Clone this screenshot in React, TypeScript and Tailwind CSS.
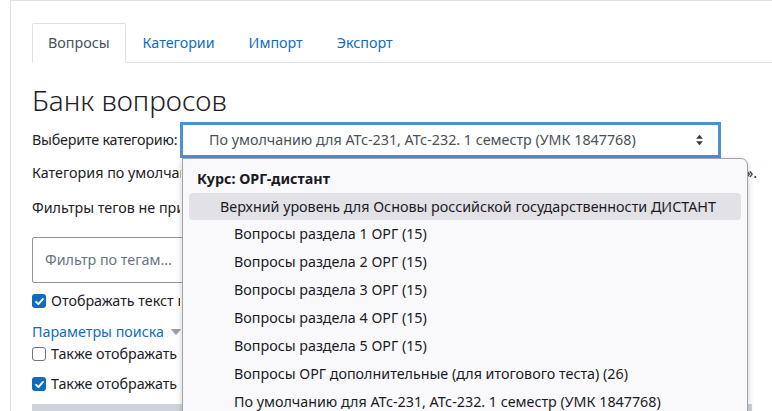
const items = [
  "Вопросы раздела 1 ОРГ (15)",
  "Вопросы раздела 2 ОРГ (15)",
  "Вопросы раздела 3 ОРГ (15)",
  "Вопросы раздела 4 ОРГ (15)",
  "Вопросы раздела 5 ОРГ (15)",
  "Вопросы ОРГ дополнительные (для итогового теста) (26)",
  "По умолчанию для АТс-231, АТс-232. 1 семестр (УМК 1847768)",
];

function Check({ checked }: { checked: boolean }) {
  if (!checked) {
    return <span className="w-[14px] h-[14px] rounded-[3px] border border-[#6c757d] bg-white shrink-0" />;
  }
  return (
    <span className="w-[14px] h-[14px] rounded-[3px] bg-[#0f6cbf] shrink-0 flex items-center justify-center">
      <svg viewBox="0 0 12 12" className="w-[11px] h-[11px]">
        <path d="M2.2 6.3 4.8 8.8 9.8 3.2" fill="none" stroke="white" strokeWidth="2" strokeLinecap="round" strokeLinejoin="round" />
      </svg>
    </span>
  );
}

export default function App() {
  return (
    <div
      className="relative w-[772px] h-[411px] overflow-hidden bg-white text-[#1d2125] text-[14.3px]"
      style={{ fontFamily: '"Noto Sans", "Open Sans", sans-serif' }}
    >
      <div className="ml-[10px] border-l border-t border-[#dee2e6] h-full pl-[21px] pt-[22px]">
        {/* Tabs */}
        <div className="flex border-b border-[#dee2e6] w-[760px] h-[40px]">
          <div className="px-[15px] border border-[#dee2e6] border-b-white -mb-px bg-white rounded-t-[2px] flex items-center text-[#495057]">
            Вопросы
          </div>
          <div className="px-[17px] flex items-center text-[#0f6cbf]">Категории</div>
          <div className="px-[17px] flex items-center text-[#0f6cbf]">Импорт</div>
          <div className="px-[17px] flex items-center text-[#0f6cbf]">Экспорт</div>
        </div>

        <h2 className="mt-[20px] text-[28px] font-light leading-[34px] text-[#1d2125]">Банк вопросов</h2>

        <div className="mt-[5px] flex items-center">
          <span className="w-[148px] whitespace-nowrap tracking-[-0.2px]">Выберите категорию:</span>
          <div className="w-[541px] h-[36px] border-[3px] border-[#4a90d9] flex items-center pl-[26px] pr-[14px] text-[#495057]">
            <span className="flex-1">По умолчанию для АТс-231, АТс-232. 1 семестр (УМК 1847768)</span>
            <svg viewBox="0 0 10 14" className="w-[9px] h-[12px]">
              <path d="M5 1 9 5.5H1Z M5 13 9 8.5H1Z" fill="#3a3a3a" />
            </svg>
          </div>
        </div>

        <div className="flex w-[725px] h-[30px] items-center whitespace-nowrap">
          <span className="w-[149px] overflow-hidden">Категория по умолчанию</span>
          <span className="flex-1" />
          <span>».</span>
        </div>
        <div className="h-[40px] flex items-center whitespace-nowrap">
          <span className="w-[148px] overflow-hidden">Фильтры тегов не применяются</span>
        </div>

        <div className="mt-[9px] w-[160px] h-[46px] border border-[#8f959e] rounded-[2px] flex items-center pl-[12px] text-[#6a737b]">
          Фильтр по тегам...
        </div>

        <div className="mt-[6px] h-[24px] flex items-center gap-[5px] whitespace-nowrap">
          <Check checked />
          <span className="w-[129px] overflow-hidden">Отображать текст вопроса</span>
        </div>
        <div className="mt-[9px] h-[20px] flex items-center gap-[6px] text-[#0f6cbf]">
          Параметры поиска
          <svg viewBox="0 0 12 8" className="w-[12px] h-[7px]">
            <path d="M0 0 H12 L6 7 Z" fill="#9aa0a6" />
          </svg>
        </div>
        <div className="h-[24px] flex items-center gap-[5px] whitespace-nowrap">
          <Check checked={false} />
          <span className="w-[129px] overflow-hidden">Также отображать вопросы</span>
        </div>
        <div className="mt-[6px] h-[24px] flex items-center gap-[5px] whitespace-nowrap">
          <Check checked />
          <span className="w-[129px] overflow-hidden">Также отображать старые</span>
        </div>
        <div className="mt-[8px] w-[720px] h-[20px] bg-[#ced4da]" />
      </div>

      {/* Open select list */}
      <div className="absolute left-[182px] top-[158px] w-[566px] h-[270px] bg-[#f9f9fb] border border-[#a3a3a8] rounded-[7px] rounded-tl-none shadow-[0_2px_6px_rgba(0,0,0,0.2)] px-[6px] text-[#1b1b1f]">
        <div className="h-[34px] pt-[6px] flex items-center pl-[8px] font-bold">Курс: ОРГ-дистант</div>
        <div className="h-[27px] flex items-center pl-[31px] bg-[#e1e1e6] rounded-[4px]">
          Верхний уровень для Основы российской государственности ДИСТАНТ
        </div>
        {items.map((t) => (
          <div key={t} className="h-[28px] flex items-center pl-[45px]">
            {t}
          </div>
        ))}
      </div>
    </div>
  );
}
